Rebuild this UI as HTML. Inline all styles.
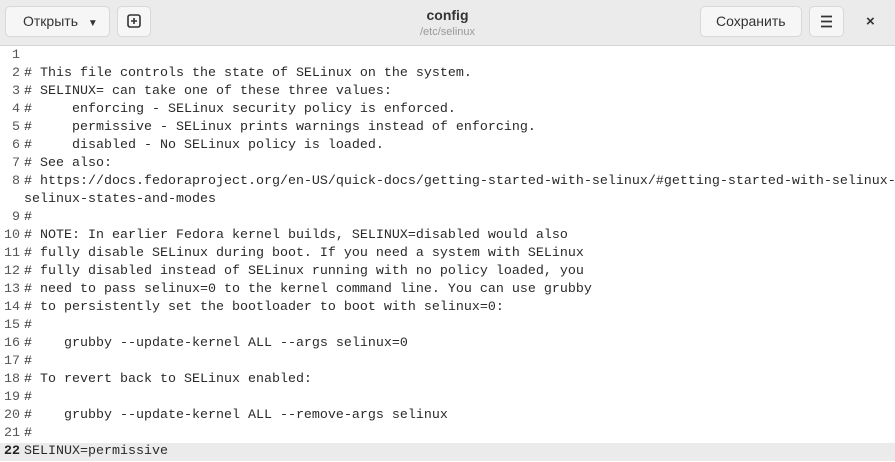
<!DOCTYPE html>
<html><head><meta charset="utf-8"><style>
body{margin:0;width:895px;height:462px;overflow:hidden;background:#fff;font-family:"Liberation Sans",sans-serif}
.hb{position:absolute;left:0;top:0;width:895px;height:45px;background:#ebebeb;border-bottom:1px solid #d6d6d6}
.btn{position:absolute;top:6px;height:31px;background:#f6f6f6;border:1px solid #d8d8d8;border-radius:5px;box-sizing:border-box;font-size:14px;color:#333;line-height:29px}
.title{position:absolute;left:0;width:895px;text-align:center;top:7px;font-size:14px;font-weight:bold;color:#333}
.sub{position:absolute;left:0;width:895px;text-align:center;top:26px;font-size:11px;color:#999}
.ed{position:absolute;left:0;top:47px;width:895px;font-family:"Liberation Mono",monospace;font-size:13.33px;line-height:18px;color:#2a2a2a}
.l{position:relative;height:18px}
.n{position:absolute;left:0;width:20px;text-align:right;color:#555}
.t{position:absolute;left:24px;white-space:pre}
.cur{background:#ebebeb}
</style></head><body>
<div class="hb">
<div class="btn" style="left:5px;width:105px;padding-left:17px">Открыть <span style="font-size:10px;margin-left:6px">▼</span></div>
<div class="btn" style="left:117px;width:34px"><svg width="32" height="29" viewBox="0 0 32 29"><rect x="10" y="8" width="12" height="12" rx="2" fill="none" stroke="#333" stroke-width="1.6"/><path d="M16 11v6M13 14h6" stroke="#333" stroke-width="1.6"/></svg></div>
<div class="title">config</div><div class="sub">/etc/selinux</div>
<div class="btn" style="left:700px;width:102px;padding-left:15px">Сохранить</div>
<div class="btn" style="left:809px;width:35px"><svg width="33" height="29" viewBox="0 0 33 29"><path d="M11 9.5h11M11 14.5h11M11 19.5h11" stroke="#333" stroke-width="1.8"/></svg></div>
<div style="position:absolute;left:866px;top:13px;font-size:15px;font-weight:bold;color:#333">×</div>
</div>
<div class="ed"><div class="l"><span class="n">1</span><span class="t"></span></div><div class="l"><span class="n">2</span><span class="t"># This file controls the state of SELinux on the system.</span></div><div class="l"><span class="n">3</span><span class="t"># SELINUX= can take one of these three values:</span></div><div class="l"><span class="n">4</span><span class="t">#     enforcing - SELinux security policy is enforced.</span></div><div class="l"><span class="n">5</span><span class="t">#     permissive - SELinux prints warnings instead of enforcing.</span></div><div class="l"><span class="n">6</span><span class="t">#     disabled - No SELinux policy is loaded.</span></div><div class="l"><span class="n">7</span><span class="t"># See also:</span></div><div class="l"><span class="n">8</span><span class="t"># https://docs.fedoraproject.org/en-US/quick-docs/getting-started-with-selinux/#getting-started-with-selinux-</span></div><div class="l"><span class="t">selinux-states-and-modes</span></div><div class="l"><span class="n">9</span><span class="t">#</span></div><div class="l"><span class="n">10</span><span class="t"># NOTE: In earlier Fedora kernel builds, SELINUX=disabled would also</span></div><div class="l"><span class="n">11</span><span class="t"># fully disable SELinux during boot. If you need a system with SELinux</span></div><div class="l"><span class="n">12</span><span class="t"># fully disabled instead of SELinux running with no policy loaded, you</span></div><div class="l"><span class="n">13</span><span class="t"># need to pass selinux=0 to the kernel command line. You can use grubby</span></div><div class="l"><span class="n">14</span><span class="t"># to persistently set the bootloader to boot with selinux=0:</span></div><div class="l"><span class="n">15</span><span class="t">#</span></div><div class="l"><span class="n">16</span><span class="t">#    grubby --update-kernel ALL --args selinux=0</span></div><div class="l"><span class="n">17</span><span class="t">#</span></div><div class="l"><span class="n">18</span><span class="t"># To revert back to SELinux enabled:</span></div><div class="l"><span class="n">19</span><span class="t">#</span></div><div class="l"><span class="n">20</span><span class="t">#    grubby --update-kernel ALL --remove-args selinux</span></div><div class="l"><span class="n">21</span><span class="t">#</span></div><div class="l cur"><span class="n" style="font-weight:bold;color:#222">22</span><span class="t">SELINUX=permissive</span></div></div>
</body></html>
